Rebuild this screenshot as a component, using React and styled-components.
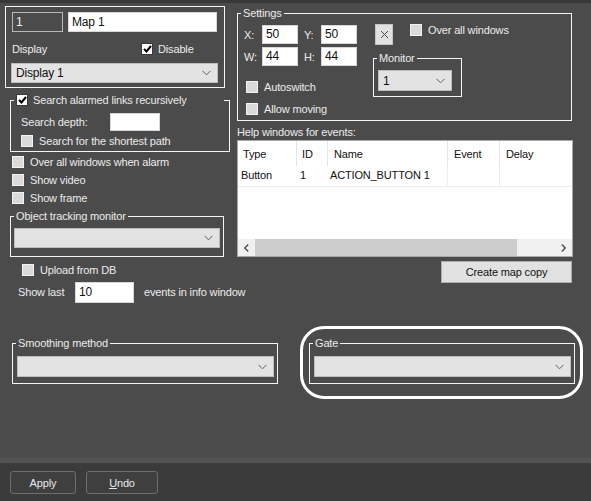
import React from 'react';
import styled, { createGlobalStyle } from 'styled-components';

const GlobalStyle = createGlobalStyle`
  html, body {
    margin: 0;
    padding: 0;
    background: #4b4b4b;
  }
  body {
    font-family: "Liberation Sans", Arial, sans-serif;
    font-size: 11px;
    letter-spacing: -0.15px;
    color: #ebebeb;
  }
  * {
    box-sizing: border-box;
  }
`;

const Page = styled.div`
  width: 591px;
  height: 501px;
  display: flex;
  flex-direction: column;
  background: #4b4b4b;
  border-top: 3px solid #383838;
  overflow: hidden;
`;

const Main = styled.div`
  display: flex;
  align-items: flex-start;
  padding: 3px 0 0 5px;
`;

const LeftCol = styled.div`
  width: 225px;
  display: flex;
  flex-direction: column;
`;

const RightCol = styled.div`
  width: 336px;
  margin-left: 7px;
  display: flex;
  flex-direction: column;
`;

const Group = styled.fieldset`
  margin: ${({ $mt }) => $mt || 0}px 0 0 ${({ $ml }) => $ml || 0}px;
  width: ${({ $w }) => $w}px;
  height: ${({ $h }) => ($h ? `${$h}px` : 'auto')};
  border: 1px solid #f4f4f4;
  padding: 0 0 ${({ $pb }) => $pb || 0}px 0;
  min-width: 0;
`;

const GroupBody = styled.div`
  display: flex;
  flex-direction: ${({ $row }) => ($row ? 'row' : 'column')};
  padding: ${({ $pt }) => $pt || 0}px ${({ $px }) => $px || 4}px 0;
`;

const Legend = styled.legend`
  margin-left: 3px;
  padding: 0 2px;
  height: 14px;
  line-height: 14px;
  display: flex;
  align-items: center;
  gap: 5px;
  width: ${({ $w }) => ($w ? `${$w}px` : 'auto')};
`;

const Row = styled.div`
  display: flex;
  align-items: center;
  height: ${({ $h }) => $h || 18}px;
  margin-top: ${({ $mt }) => $mt || 0}px;
  margin-left: ${({ $ml }) => $ml || 0}px;
`;

const Label = styled.span`
  display: inline-block;
  flex-shrink: 0;
  width: ${({ $w }) => ($w ? `${$w}px` : 'auto')};
  margin-left: ${({ $ml }) => $ml || 0}px;
  white-space: nowrap;
`;

const TextInput = styled.div`
  width: ${({ $w }) => $w}px;
  height: ${({ $h }) => $h || 19}px;
  margin-left: ${({ $ml }) => $ml || 0}px;
  background: ${({ $dark }) => ($dark ? '#4b4b4b' : '#ffffff')};
  border: 1px solid ${({ $dark }) => ($dark ? '#b8b8b8' : '#d8d8d8')};
  color: ${({ $dark }) => ($dark ? '#f0f0f0' : '#111')};
  padding-left: 3px;
  line-height: ${({ $h }) => ($h || 19) - 2}px;
  font-size: 12px;
  letter-spacing: -0.2px;
  white-space: nowrap;
  flex-shrink: 0;
`;

const SelectBox = styled.div`
  width: ${({ $w }) => $w}px;
  height: ${({ $h }) => $h || 20}px;
  margin: ${({ $mt }) => $mt || 0}px 0 0 ${({ $ml }) => $ml || 0}px;
  background: #e3e3e3;
  border: 1px solid #bdbdbd;
  color: #111;
  font-size: 12px;
  letter-spacing: -0.2px;
  display: flex;
  align-items: center;
  justify-content: space-between;
  padding: 0 6px 0 4px;
  flex-shrink: 0;
`;

const Box = styled.span`
  width: 12px;
  height: 12px;
  flex-shrink: 0;
  display: inline-flex;
  align-items: center;
  justify-content: center;
  background: ${({ $on }) => ($on ? '#ffffff' : '#dadada')};
  border: 1px solid ${({ $on }) => ($on ? '#3a3a3a' : '#f2f2f2')};
`;

const CheckRow = styled.label`
  display: flex;
  align-items: center;
  gap: ${({ $gap }) => $gap || 6}px;
  height: ${({ $h }) => $h || 18}px;
  margin-top: ${({ $mt }) => $mt || 0}px;
  margin-left: ${({ $ml }) => $ml || 0}px;
  white-space: nowrap;
`;

const Chevron = () => (
  <svg width="9" height="6" viewBox="0 0 9 6">
    <polyline points="0.5,0.8 4.5,4.8 8.5,0.8" fill="none" stroke="#606060" strokeWidth="1" />
  </svg>
);

const SideArrow = ({ right }) => (
  <svg width="5" height="8" viewBox="0 0 5 8">
    <polyline
      points={right ? '0.8,0.5 4.2,4 0.8,7.5' : '4.2,0.5 0.8,4 4.2,7.5'}
      fill="none"
      stroke="#505050"
      strokeWidth="1.4"
    />
  </svg>
);

const CloseGlyph = () => (
  <svg width="9" height="9" viewBox="0 0 9 9">
    <path d="M1 1 L8 8 M8 1 L1 8" stroke="#4a4a4a" strokeWidth="1" fill="none" />
  </svg>
);

const Check = ({ on }) => (
  <Box $on={on}>
    {on && (
      <svg width="9" height="8" viewBox="0 0 9 8">
        <polyline points="1,4 3.5,6.5 8,1" fill="none" stroke="#000" strokeWidth="2" />
      </svg>
    )}
  </Box>
);

const Select = ({ value, ...props }) => (
  <SelectBox {...props}>
    <span>{value}</span>
    <Chevron />
  </SelectBox>
);

const SmallButton = styled.div`
  width: 18px;
  height: 21px;
  background: #e1e1e1;
  border: 1px solid #c4c4c4;
  display: flex;
  align-items: center;
  justify-content: center;
  flex-shrink: 0;
`;

const SettingsLeft = styled.div`
  display: flex;
  flex-direction: column;
  width: 113px;
`;

const SettingsRight = styled.div`
  display: flex;
  flex-direction: column;
  margin-left: 18px;
  padding-top: 4px;
`;

const TopRight = styled.div`
  display: flex;
  align-items: flex-start;
  gap: 17px;
`;

const HelpLabel = styled.div`
  margin-top: 4px;
  height: 14px;
  line-height: 14px;
`;

const Table = styled.div`
  margin-top: 1px;
  width: 336px;
  height: 117px;
  background: #ffffff;
  border: 1px solid #a8a8a8;
  color: #111;
  display: flex;
  flex-direction: column;
`;

const Grid = styled.div`
  display: grid;
  grid-template-columns: 59px 31px 120px 52px 1fr;
`;

const HeadCell = styled.div`
  height: 25px;
  padding: 6px 0 0 ${({ $pl }) => $pl || 5}px;
  line-height: 15px;
  border-right: ${({ $last }) => ($last ? 'none' : '1px solid #e6e6e6')};
`;

const Cell = styled.div`
  height: 21px;
  line-height: 19px;
  padding-left: ${({ $pl }) => $pl || 3}px;
  border-bottom: 1px solid #ededed;
  border-right: ${({ $line }) => ($line ? '1px solid #ededed' : 'none')};
  white-space: nowrap;
`;

const TableFill = styled.div`
  flex: 1;
`;

const HScroll = styled.div`
  height: 17px;
  background: #f0f0f0;
  display: flex;
  align-items: center;
`;

const ScrollArrow = styled.div`
  width: 17px;
  height: 17px;
  display: flex;
  align-items: center;
  justify-content: center;
  flex-shrink: 0;
`;

const ScrollThumb = styled.div`
  width: 262px;
  height: 17px;
  background: #cdcdcd;
`;

const ScrollTrack = styled.div`
  flex: 1;
`;

const LightButton = styled.div`
  align-self: flex-end;
  margin: 4px 1px 0 0;
  width: 131px;
  height: 22px;
  background: #e1e1e1;
  border: 1px solid #adadad;
  color: #111;
  display: flex;
  align-items: center;
  justify-content: center;
`;

const BottomRow = styled.div`
  display: flex;
  align-items: flex-start;
  margin-top: 23px;
  padding-left: 12px;
`;

const Highlight = styled.div`
  margin-left: 22px;
  border: 3px solid #ffffff;
  border-radius: 24px;
  padding: 7px 5px 12px 6px;
`;

const Spacer = styled.div`
  flex: 1;
`;

const Footer = styled.div`
  height: 44px;
  border-top: 6px solid #525252;
  background: #3b3b3b;
  display: flex;
  align-items: flex-start;
  gap: 10px;
  padding: 8px 0 0 10px;
`;

const FooterButton = styled.div`
  width: ${({ $w }) => $w}px;
  height: 23px;
  border: 1px solid #6e6e6e;
  border-radius: 3px;
  background: #3f3f3f;
  color: #e8e8e8;
  display: flex;
  align-items: center;
  justify-content: center;
  u {
    text-decoration: underline;
  }
`;

export default function App() {
  return (
    <Page>
      <GlobalStyle />
      <Main>
        <LeftCol>
          <Group $w={220} $h={82}>
            <GroupBody $px={6} $pt={5}>
              <Row $h={20}>
                <TextInput $dark $w={51} $h={20}>1</TextInput>
                <TextInput $w={149} $h={20} $ml={5}>Map 1</TextInput>
              </Row>
              <Row $h={14} $mt={10}>
                <Label $w={129}>Display</Label>
                <CheckRow $gap={5}>
                  <Check on />
                  Disable
                </CheckRow>
              </Row>
              <Select value="Display 1" $w={207} $ml={-1} $mt={7} />
            </GroupBody>
          </Group>

          <Group $w={220} $ml={5} $mt={5} $pb={1}>
            <Legend $w={210}>
              <Check on />
              <span>Search alarmed links recursively</span>
            </Legend>
            <GroupBody $px={10}>
              <Row $mt={6}>
                <Label $w={89}>Search depth:</Label>
                <TextInput $w={50} $h={18} />
              </Row>
              <CheckRow $mt={1}>
                <Check />
                Search for the shortest path
              </CheckRow>
            </GroupBody>
          </Group>

          <CheckRow $ml={7} $mt={1}>
            <Check />
            Over all windows when alarm
          </CheckRow>
          <CheckRow $ml={7}>
            <Check />
            Show video
          </CheckRow>
          <CheckRow $ml={7}>
            <Check />
            Show frame
          </CheckRow>

          <Group $w={214} $ml={5} $mt={2} $pb={8}>
            <Legend>Object tracking monitor</Legend>
            <GroupBody $px={3}>
              <Select $w={206} $mt={5} />
            </GroupBody>
          </Group>

          <CheckRow $ml={17} $mt={4}>
            <Check />
            Upload from DB
          </CheckRow>
          <Row $h={22} $mt={2} $ml={13}>
            <Label $w={57}>Show last</Label>
            <TextInput $w={59} $h={21}>10</TextInput>
            <Label $ml={10}>events in info window</Label>
          </Row>
        </LeftCol>

        <RightCol>
          <Group $w={335} $pb={2}>
            <Legend>Settings</Legend>
            <GroupBody $row $px={6}>
              <SettingsLeft>
                <Row $h={19} $mt={5}>
                  <Label $w={18}>X:</Label>
                  <TextInput $w={36}>50</TextInput>
                  <Label $w={17} $ml={6}>Y:</Label>
                  <TextInput $w={36}>50</TextInput>
                </Row>
                <Row $h={19} $mt={3}>
                  <Label $w={18}>W:</Label>
                  <TextInput $w={36}>44</TextInput>
                  <Label $w={17} $ml={6}>H:</Label>
                  <TextInput $w={36}>44</TextInput>
                </Row>
                <CheckRow $ml={2} $mt={12}>
                  <Check />
                  Autoswitch
                </CheckRow>
                <CheckRow $ml={2} $mt={4}>
                  <Check />
                  Allow moving
                </CheckRow>
              </SettingsLeft>
              <SettingsRight>
                <TopRight>
                  <SmallButton>
                    <CloseGlyph />
                  </SmallButton>
                  <CheckRow $gap={6} $h={12}>
                    <Check />
                    Over all windows
                  </CheckRow>
                </TopRight>
                <Group $w={89} $ml={-2} $mt={6} $pb={5}>
                  <Legend>Monitor</Legend>
                  <GroupBody $px={4}>
                    <Select value="1" $w={74} $h={21} $mt={5} />
                  </GroupBody>
                </Group>
              </SettingsRight>
            </GroupBody>
          </Group>

          <HelpLabel>Help windows for events:</HelpLabel>
          <Table>
            <Grid>
              <HeadCell>Type</HeadCell>
              <HeadCell>ID</HeadCell>
              <HeadCell $pl={6}>Name</HeadCell>
              <HeadCell $pl={6}>Event</HeadCell>
              <HeadCell $pl={6} $last>Delay</HeadCell>
              <Cell>Button</Cell>
              <Cell>1</Cell>
              <Cell $pl={2} $line>ACTION_BUTTON 1</Cell>
              <Cell $line />
              <Cell />
            </Grid>
            <TableFill />
            <HScroll>
              <ScrollArrow>
                <SideArrow />
              </ScrollArrow>
              <ScrollThumb />
              <ScrollTrack />
              <ScrollArrow>
                <SideArrow right />
              </ScrollArrow>
            </HScroll>
          </Table>
          <LightButton>Create map copy</LightButton>
        </RightCol>
      </Main>

      <BottomRow>
        <Group $w={266} $mt={10} $pb={6}>
          <Legend>Smoothing method</Legend>
          <GroupBody $px={4}>
            <Select $w={257} $h={21} $mt={6} />
          </GroupBody>
        </Group>
        <Highlight>
          <Group $w={266} $pb={6}>
            <Legend>Gate</Legend>
            <GroupBody $px={4}>
              <Select $w={257} $h={21} $mt={6} />
            </GroupBody>
          </Group>
        </Highlight>
      </BottomRow>

      <Spacer />
      <Footer>
        <FooterButton $w={66}>Apply</FooterButton>
        <FooterButton $w={72}>
          <span>
            <u>U</u>ndo
          </span>
        </FooterButton>
      </Footer>
    </Page>
  );
}
